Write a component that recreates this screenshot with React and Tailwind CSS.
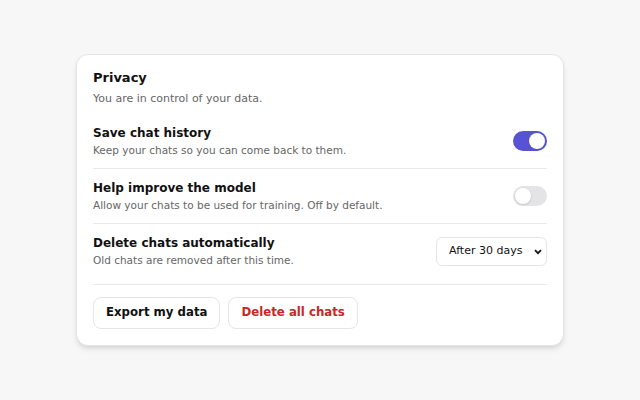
import { useState } from "react";

const Toggle = ({ on, onChange }) => (
  <button
    onClick={() => onChange(!on)}
    className={
      "relative w-[34px] h-5 rounded-full shrink-0 " +
      (on ? "bg-[#5753d4]" : "bg-[#e4e4e7]")
    }
  >
    <span
      className={
        "absolute top-[2px] w-4 h-4 rounded-full bg-white shadow-sm " +
        (on ? "left-4" : "left-[2px]")
      }
    />
  </button>
);

const Row = ({ title, desc, children, last }) => (
  <div
    className={
      "flex items-center justify-between py-[10px] " +
      (last ? "" : "border-b border-[#e8e8e8]")
    }
  >
    <div>
      <div className="text-[12px] leading-[18px] font-bold text-[#111]">{title}</div>
      <div className="text-[10.5px] leading-4 text-[#666]">{desc}</div>
    </div>
    {children}
  </div>
);

export default function App() {
  const [history, setHistory] = useState(true);
  const [improve, setImprove] = useState(false);
  const [retention, setRetention] = useState("30");

  return (
    <div
      className="w-full h-[400px] bg-[#f7f7f7] flex items-center justify-center"
      style={{ fontFamily: '"DejaVu Sans", sans-serif' }}
    >
      <div className="w-[488px] bg-white border border-[#e5e5e5] rounded-xl shadow-md px-4 pt-[14px] pb-4">
        <div className="mb-[7px]">
          <h1 className="text-[13px] leading-[18px] font-bold text-[#111]">Privacy</h1>
          <p className="mt-1 text-[11px] leading-4 text-[#666]">You are in control of your data.</p>
        </div>

        <Row title="Save chat history" desc="Keep your chats so you can come back to them.">
          <Toggle on={history} onChange={setHistory} />
        </Row>
        <Row title="Help improve the model" desc="Allow your chats to be used for training. Off by default.">
          <Toggle on={improve} onChange={setImprove} />
        </Row>
        <Row title="Delete chats automatically" desc="Old chats are removed after this time." last>
          <div className="relative">
            <select
              value={retention}
              onChange={(e) => setRetention(e.target.value)}
              className="appearance-none w-[111px] h-[29px] pl-3 pr-4 text-[11px] text-[#111] bg-white border border-[#e5e5e5] rounded-md"
            >
              <option value="7">After 7 days</option>
              <option value="30">After 30 days</option>
              <option value="90">After 90 days</option>
            </select>
            <svg
              className="absolute right-[5px] top-[12px] pointer-events-none"
              width="8"
              height="6"
              viewBox="0 0 8 6"
            >
              <path d="M1 1.2 L4 4.2 L7 1.2" fill="none" stroke="#111" strokeWidth="1.7" />
            </svg>
          </div>
        </Row>

        <div className="mt-1.5 pt-3 border-t border-[#e8e8e8] flex gap-2">
          <button className="h-8 px-3 text-[11.75px] font-bold text-[#111] border border-[#e5e5e5] rounded-lg bg-white">
            Export my data
          </button>
          <button className="h-8 px-3 text-[11.75px] font-bold text-[#c62828] border border-[#e5e5e5] rounded-lg bg-white">
            Delete all chats
          </button>
        </div>
      </div>
    </div>
  );
}
